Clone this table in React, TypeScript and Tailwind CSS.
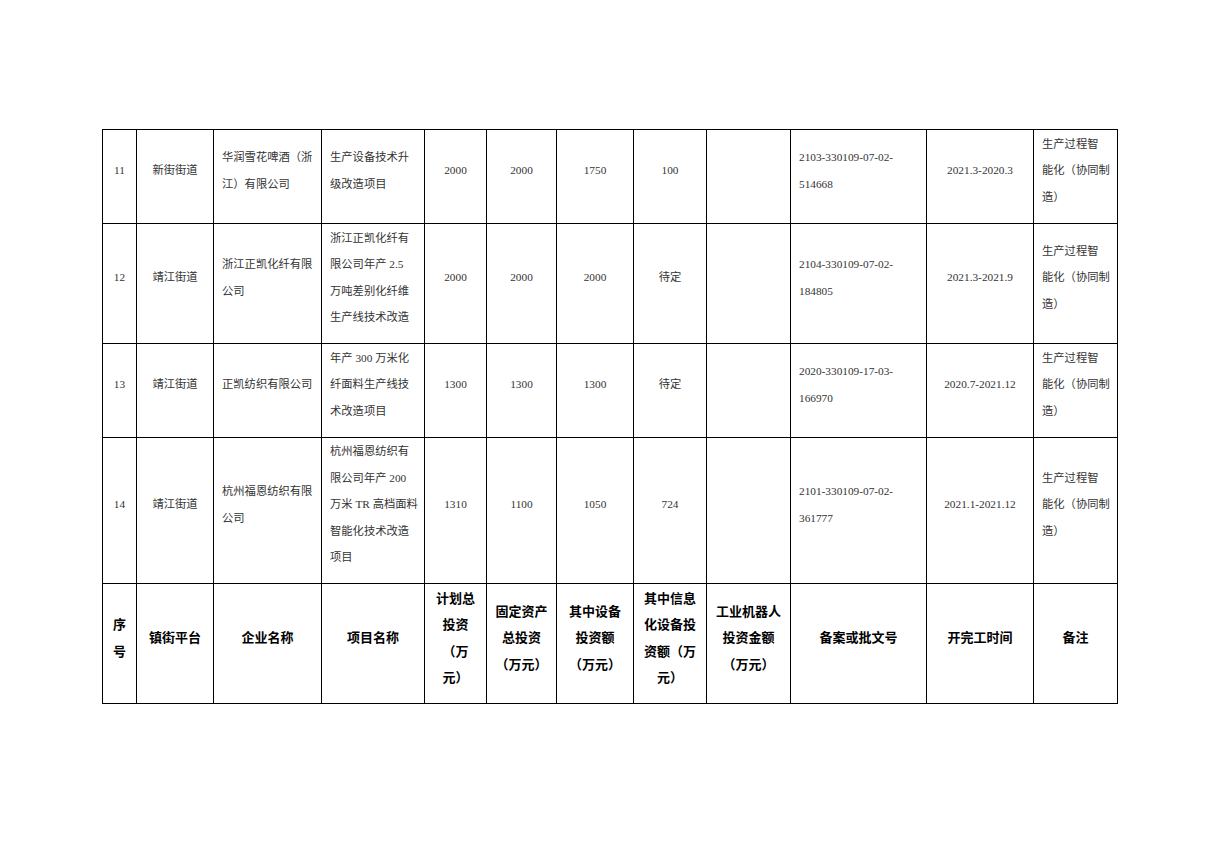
import React from 'react';

type Cell = string | string[];

interface RowData {
  cells: Cell[];
  heightClass: string;
}

// column width classes, table starts at x=102
const colClasses = [
  'w-[34px]',
  'w-[77px]',
  'w-[108px]',
  'w-[103px]',
  'w-[62px]',
  'w-[70px]',
  'w-[77px]',
  'w-[73px]',
  'w-[84px]',
  'w-[136px]',
  'w-[107px]',
  'w-[84px]',
];
// which columns are left aligned in body rows
const leftCols = [2, 3, 9, 11];

const remark = ['生产过程智', '能化（协同制', '造）'];

const rows: RowData[] = [
  {
    heightClass: 'h-[94px]',
    cells: [
      '11',
      '新街街道',
      ['华润雪花啤酒（浙', '江）有限公司'],
      ['生产设备技术升', '级改造项目'],
      '2000',
      '2000',
      '1750',
      '100',
      '',
      ['2103-330109-07-02-', '514668'],
      '2021.3-2020.3',
      remark,
    ],
  },
  {
    heightClass: 'h-[120px]',
    cells: [
      '12',
      '靖江街道',
      ['浙江正凯化纤有限', '公司'],
      ['浙江正凯化纤有', '限公司年产 2.5', '万吨差别化纤维', '生产线技术改造'],
      '2000',
      '2000',
      '2000',
      '待定',
      '',
      ['2104-330109-07-02-', '184805'],
      '2021.3-2021.9',
      remark,
    ],
  },
  {
    heightClass: 'h-[94px]',
    cells: [
      '13',
      '靖江街道',
      '正凯纺织有限公司',
      ['年产 300 万米化', '纤面料生产线技', '术改造项目'],
      '1300',
      '1300',
      '1300',
      '待定',
      '',
      ['2020-330109-17-03-', '166970'],
      '2020.7-2021.12',
      remark,
    ],
  },
  {
    heightClass: 'h-[146px]',
    cells: [
      '14',
      '靖江街道',
      ['杭州福恩纺织有限', '公司'],
      ['杭州福恩纺织有', '限公司年产 200', '万米 TR 高档面料', '智能化技术改造', '项目'],
      '1310',
      '1100',
      '1050',
      '724',
      '',
      ['2101-330109-07-02-', '361777'],
      '2021.1-2021.12',
      remark,
    ],
  },
];

const header: Cell[] = [
  ['序', '号'],
  '镇街平台',
  '企业名称',
  '项目名称',
  ['计划总', '投资', '（万', '元）'],
  ['固定资产', '总投资', '（万元）'],
  ['其中设备', '投资额', '（万元）'],
  ['其中信息', '化设备投', '资额（万', '元）'],
  ['工业机器人', '投资金额', '（万元）'],
  '备案或批文号',
  '开完工时间',
  '备注',
];

function Lines({ value }: { value: Cell }) {
  const list = Array.isArray(value) ? value : [value];
  return (
    <>
      {list.map((line, i) => (
        <div key={i} className="whitespace-nowrap">
          {line}
        </div>
      ))}
    </>
  );
}

export default function App() {
  return (
    <div className="min-h-[852px] w-[1205px] bg-white pt-[129px] pl-[102px]">
      <table className="w-[1015px] table-fixed border-collapse">
        <colgroup>
          {colClasses.map((cls, i) => (
            <col key={i} className={cls} />
          ))}
        </colgroup>
        <tbody>
          {rows.map((row, r) => (
            <tr key={r} className={row.heightClass}>
              {row.cells.map((cell, c) => (
                <td
                  key={c}
                  className={
                    'border border-black align-middle pb-[12px] pt-0 font-["Liberation_Serif","Noto_Sans_CJK_SC",serif] text-[11.3px] leading-[26.4px] text-[#333] ' +
                    (leftCols.includes(c) ? 'text-left pl-[8px] pr-0' : 'text-center px-0')
                  }
                >
                  <Lines value={cell} />
                </td>
              ))}
            </tr>
          ))}
          <tr className="h-[120px]">
            {header.map((cell, c) => (
              <td
                key={c}
                className='border border-black align-middle text-center px-0 pb-[12px] pt-0 font-["Noto_Sans_CJK_SC",sans-serif] font-bold text-[13px] leading-[26.4px] text-black'
              >
                <Lines value={cell} />
              </td>
            ))}
          </tr>
        </tbody>
      </table>
    </div>
  );
}
